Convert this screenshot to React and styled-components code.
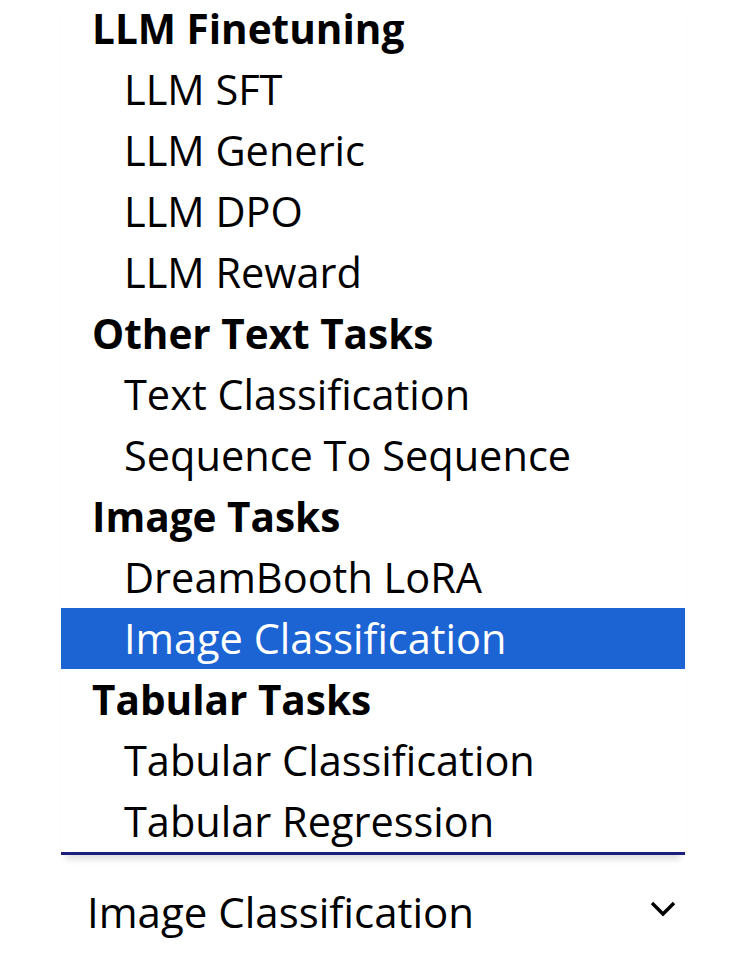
import styled, { createGlobalStyle } from "styled-components";

const GlobalStyle = createGlobalStyle`
  html, body {
    margin: 0;
    padding: 0;
    background: #ffffff;
  }
  body {
    font-family: "Open Sans", "Noto Sans", sans-serif;
    color: #000000;
    overflow: hidden;
  }
`

const Page = styled.div`
  width: 740px;
  height: 965px;
  overflow: hidden;
  background: #ffffff;
`

const ListBox = styled.ul`
  list-style: none;
  margin: -2px 0 0 61px;
  padding: 0;
  width: 624px;
  border-bottom: 3px solid #1b1f7c;
  box-shadow: 0 9px 7px -5px rgba(0, 0, 0, 0.14);
`

const GroupLabel = styled.li`
  height: 61px;
  box-sizing: border-box;
  padding: 0 0 0 31px;
  font-size: 40.5px;
  font-weight: 700;
  line-height: 61px;
  white-space: nowrap;
`

const Option = styled.li`
  height: 61px;
  box-sizing: border-box;
  padding: 0 0 0 63px;
  font-size: 41.5px;
  font-weight: 400;
  line-height: 61px;
  white-space: nowrap;
  background: ${props => (props.$selected ? "#1c63d4" : "transparent")};
  color: ${props => (props.$selected ? "#ffffff" : "#000000")};
`

const SelectField = styled.div`
  display: flex;
  align-items: center;
  justify-content: space-between;
  width: 624px;
  height: 100px;
  margin-left: 61px;
  padding: 12px 8px 0 26px;
  box-sizing: border-box;
`

const SelectValue = styled.span`
  font-size: 42px;
  white-space: nowrap;
`

const Chevron = styled.svg`
  width: 28px;
  height: 18px;
  margin-top: -4px;
`

const groups = [
  { label: "LLM Finetuning", options: ["LLM SFT", "LLM Generic", "LLM DPO", "LLM Reward"] },
  { label: "Other Text Tasks", options: ["Text Classification", "Sequence To Sequence"] },
  { label: "Image Tasks", options: ["DreamBooth LoRA", "Image Classification"] },
  { label: "Tabular Tasks", options: ["Tabular Classification", "Tabular Regression"] },
]

const selected = "Image Classification"

export default function App () {
  return (
    <Page>
      <GlobalStyle />
      <ListBox>
        {groups.map(group => [
          <GroupLabel key={group.label}>{group.label}</GroupLabel>,
          ...group.options.map(option => (
            <Option key={option} $selected={option === selected}>{option}</Option>
          ))
        ])}
      </ListBox>
      <SelectField>
        <SelectValue>{selected}</SelectValue>
        <Chevron viewBox="0 0 28 18">
          <path d="M3 3 L14 14 L25 3" fill="none" stroke="#000" strokeWidth="3.4" />
        </Chevron>
      </SelectField>
    </Page>
  )
}
